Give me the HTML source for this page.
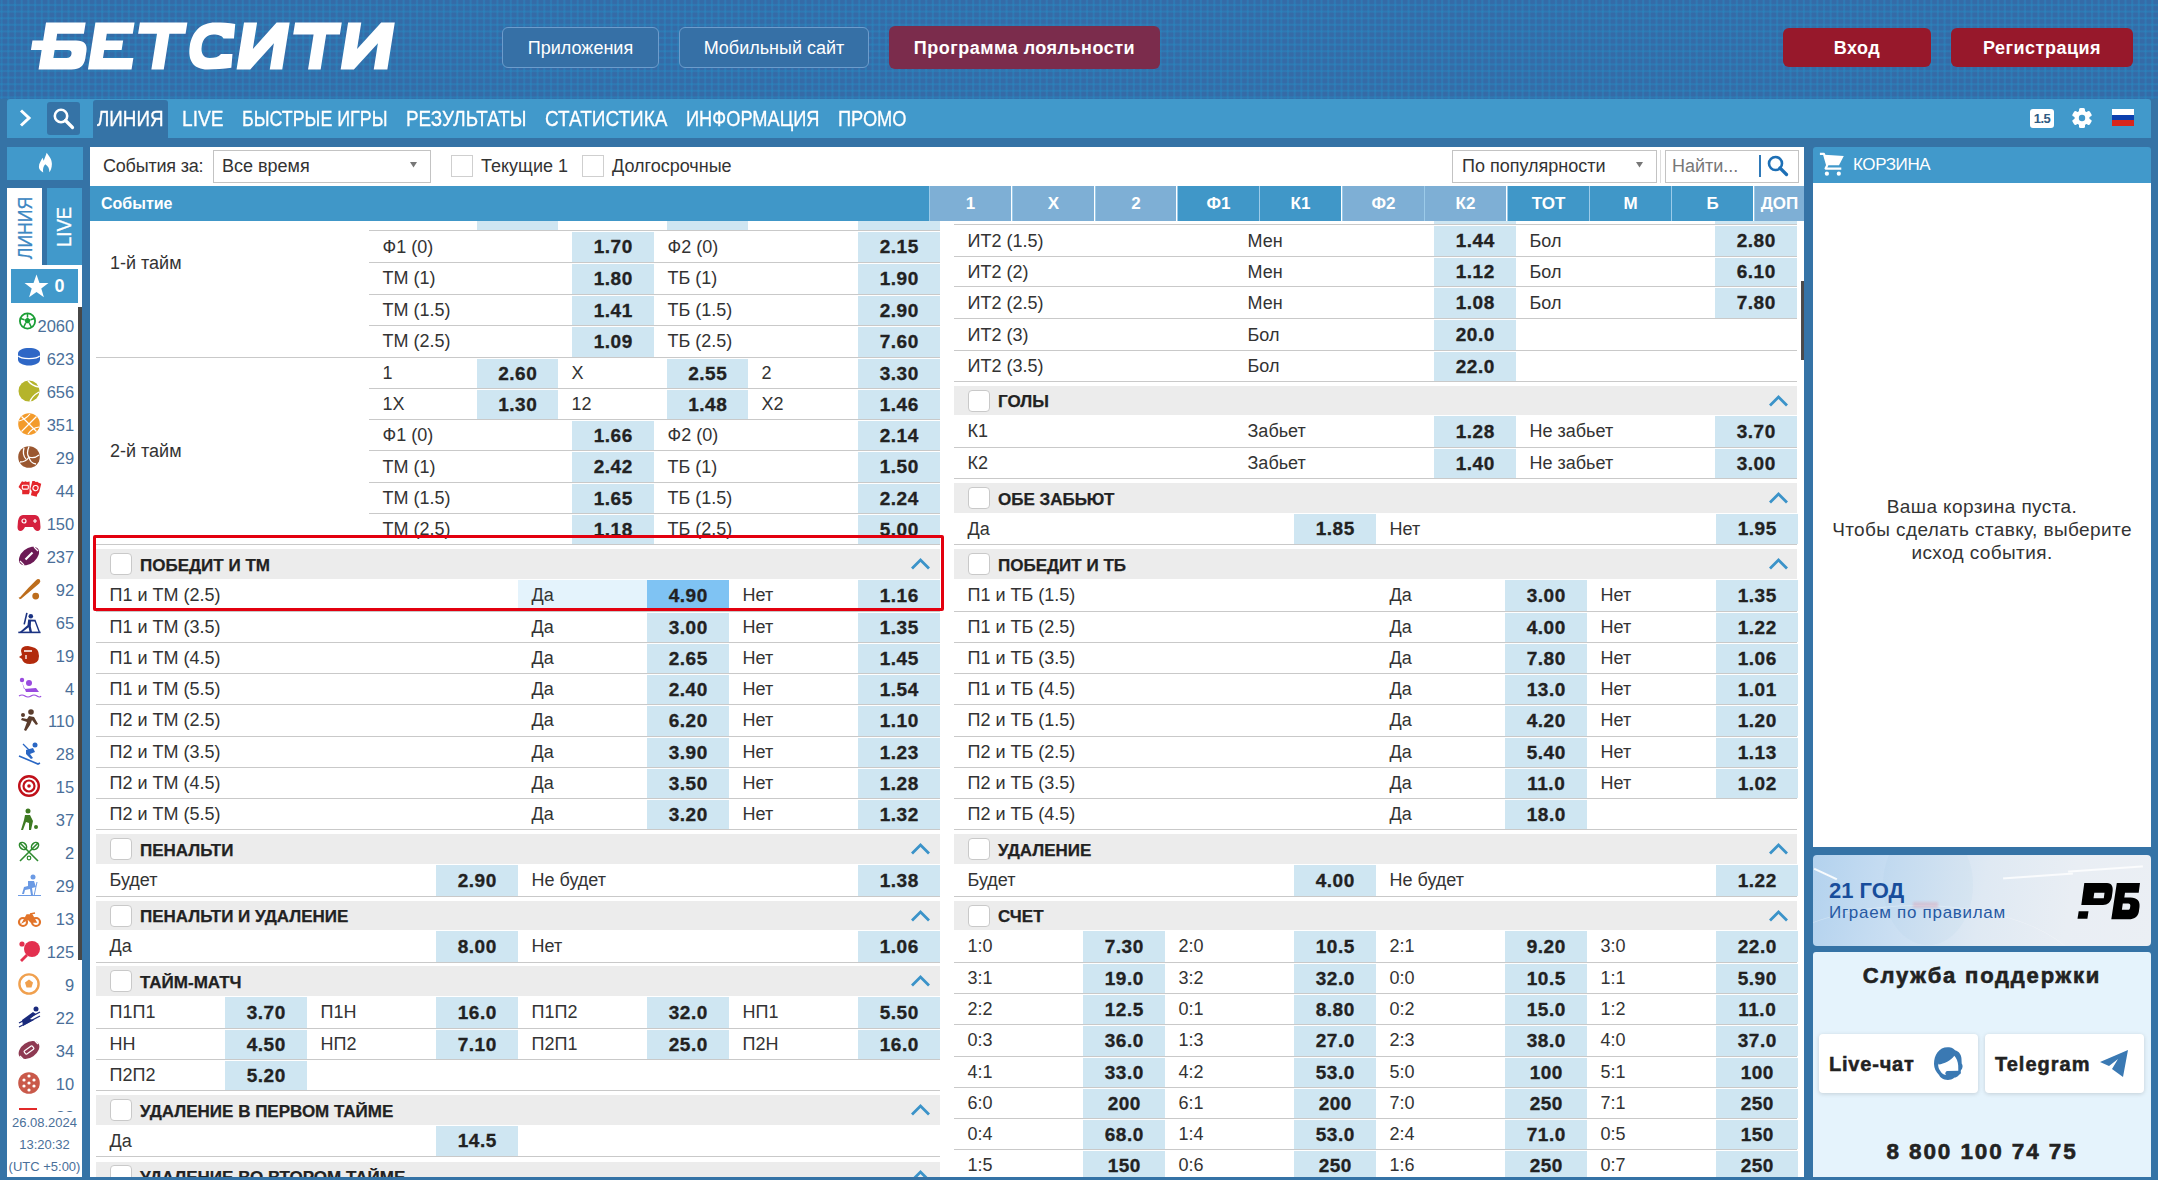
<!DOCTYPE html><html><head><meta charset='utf-8'><style>
*{box-sizing:border-box;margin:0;padding:0}
html,body{width:2158px;height:1180px;overflow:hidden}
body{position:relative;font-family:"Liberation Sans", sans-serif;background:#3573a6;}
.a{position:absolute}
.t{position:absolute;white-space:nowrap}
.hdr{position:absolute;left:0;top:0;width:2158px;height:99px;background-color:#356ba7;
 background-image:repeating-linear-gradient(90deg,transparent 0,rgba(38,142,198,.4) 1.2px,rgba(38,142,198,.4) 2px,transparent 3.2px,transparent 6.7px),repeating-linear-gradient(0deg,transparent 0,rgba(38,142,198,.4) 1.2px,rgba(38,142,198,.4) 2px,transparent 3.2px,transparent 6.6px);}
.btn{position:absolute;border-radius:6px;color:#fff;text-align:center;font-size:18px;}
.nav{position:absolute;left:7px;top:99px;width:2144px;height:39px;background:#4199cb;border-radius:3px 3px 0 0}
.nv{position:absolute;top:99px;height:39px;line-height:40px;color:#fff;font-size:21.5px;white-space:nowrap;-webkit-text-stroke:0.3px #fff}
.lbl{position:absolute;white-space:nowrap;font-size:18px;color:#333;}
.od{position:absolute;background:#cfe6f2;text-align:center;font-weight:bold;font-size:19px;color:#222;letter-spacing:0.5px;text-indent:0.5px;-webkit-text-stroke:0.3px #222}
.ln{position:absolute;height:1px;background:#c9c9c9}
.gh{position:absolute;background:#ececec}
.cb{position:absolute;width:22px;height:22px;background:#fff;border:1px solid #c9c9c9;border-radius:4px}
.st{position:absolute;white-space:nowrap;font-size:17px;font-weight:bold;color:#222;-webkit-text-stroke:0.25px #222}
.ch{position:absolute;width:20px;height:13px}
.sp{position:absolute;left:7px;width:75px;height:33px}
.sn{position:absolute;right:9px;top:0;line-height:33px;font-size:16px;color:#4a6f99}
</style></head><body><div class='hdr'></div><svg class='a' style='left:0;top:0' width='420' height='90'><g transform='translate(0,22.4) skewX(-9)' fill='#fff'><path d='M46,0 H85.7 V11.4 H59 V18 H79 Q91,18 91,29 V36 Q91,47 79,47 H46 V27.5 H35.3 V18 H46 Z M59,27.5 V35.5 H72 Q76.5,35.5 76.5,31.5 Q76.5,27.5 72,27.5 Z'/><path d='M95.4,0 H134.6 V11.4 H108.6 V18 H126 V27.5 H108.6 V35.5 H139 V47 H95.4 Z'/><path d='M139.9,0 H187.4 V11.4 H171.2 V47 H158.8 V11.4 H139.9 Z'/><path d='M236.5,16 L235.5,1.5 C229,0.3 222,0 215,0 C201,0 193.5,9 193.5,23.5 C193.5,38 201,47 215,47 C223,47 231,46.3 238.5,45.3 L237.5,31.5 L226,31.5 C224,34.5 220,35.5 215.5,35.5 C209,35.5 205.5,31 205.5,23.5 C205.5,16 209,12 215.5,12 C220,12 224,13 226,16 Z'/><path d='M244,0 H257.1 L257.1,26.7 L276.6,0 H289.7 V47 H277.2 V20.8 L257.7,47 H244 Z'/><path d='M295.1,0 H341.8 V12.1 H328.1 V47 H315.5 V12.1 H295.1 Z'/><path d='M348.1,0 H361.3 L361.3,26.7 L381.2,0 H394.8 V47 H381.2 V20.8 L361.3,47 H348.1 Z'/></g></svg><div class='btn' style='left:502px;top:27px;width:157px;height:41px;border:1px solid #6d9ccc;background:#3670a6;line-height:41px'>Приложения</div><div class='btn' style='left:679px;top:27px;width:190px;height:41px;border:1px solid #6d9ccc;background:#3670a6;line-height:41px'>Мобильный сайт</div><div class='btn' style='left:889px;top:26px;width:271px;height:43px;background:#7b2c4c;line-height:45px;font-weight:bold;letter-spacing:0.5px'>Программа лояльности</div><div class='btn' style='left:1783px;top:28px;width:148px;height:39px;background:#97182b;line-height:41px;font-weight:bold;letter-spacing:0.5px'>Вход</div><div class='btn' style='left:1951px;top:28px;width:182px;height:39px;background:#97182b;line-height:41px;font-weight:bold;letter-spacing:0.5px'>Регистрация</div><div class='nav'></div><svg class='a' style='left:18px;top:108px' width='16' height='20'><path d='M3,2.5 L11,10 L3,17.5' fill='none' stroke='#fff' stroke-width='3'/></svg><div class='a' style='left:47px;top:102px;width:33px;height:33px;background:#3573a6;border-radius:3px'></div><svg class='a' style='left:52px;top:107px' width='24' height='24'><circle cx='9' cy='9' r='6.2' fill='none' stroke='#fff' stroke-width='2.6'/><path d='M13.5,13.5 L20.5,20.5' stroke='#fff' stroke-width='3.2' stroke-linecap='round'/></svg><div class='a' style='left:93px;top:100px;width:75px;height:38px;background:#3573a6;border-radius:3px 3px 0 0'></div><div class='nv' style='left:97px;transform:scaleX(0.874);transform-origin:0 0'>ЛИНИЯ</div><div class='nv' style='left:182px;transform:scaleX(0.89);transform-origin:0 0'>LIVE</div><div class='nv' style='left:242px;transform:scaleX(0.83);transform-origin:0 0'>БЫСТРЫЕ ИГРЫ</div><div class='nv' style='left:406px;transform:scaleX(0.878);transform-origin:0 0'>РЕЗУЛЬТАТЫ</div><div class='nv' style='left:545px;transform:scaleX(0.882);transform-origin:0 0'>СТАТИСТИКА</div><div class='nv' style='left:686px;transform:scaleX(0.849);transform-origin:0 0'>ИНФОРМАЦИЯ</div><div class='nv' style='left:838px;transform:scaleX(0.849);transform-origin:0 0'>ПРОМО</div><div class='a' style='left:2030px;top:109px;width:24px;height:19px;background:#fff;border-radius:3px;color:#2e5b83;font-weight:bold;font-size:13px;line-height:19px;text-align:center;letter-spacing:-0.5px'>1.5</div><svg class='a' style='left:2072px;top:108px' width='21' height='21'><g fill='#fff'><rect x='7' y='0' width='6' height='20' rx='1.5' transform='rotate(0 10 10)'/><rect x='7' y='0' width='6' height='20' rx='1.5' transform='rotate(60 10 10)'/><rect x='7' y='0' width='6' height='20' rx='1.5' transform='rotate(120 10 10)'/><circle cx='10' cy='10' r='7.5'/></g><circle cx='10' cy='10' r='3.2' fill='#4199cb'/></svg><div class='a' style='left:2112px;top:109px;width:22px;height:17px;background:linear-gradient(#fff 0 33%,#0b3fae 33% 66%,#d9261c 66%)'></div><div class='a' style='left:7px;top:147px;width:76px;height:33px;background:#4199cb'></div><svg class='a' style='left:38px;top:152px' width='16' height='22'><path d='M8.65,0.8 C11,4 13.9,7 13.9,12 C13.9,16 12.5,19 11.3,20.2 C11.5,17 10.5,14.5 7.3,12.3 C5.5,14 4.5,17 5.2,20.4 C2.5,19 0.9,17 0.9,15 C0.9,11 3,9 4.5,5.7 C5,7 5.5,8 5.8,8.7 C6.5,6 8,3.5 8.65,0.8 Z' fill='#fff'/></svg><div class='a' style='left:7px;top:188px;width:35px;height:80px;background:#fff'></div><div class='a' style='left:47px;top:188px;width:35px;height:77px;background:#4199cb'></div><div class='t' style='left:24.5px;top:227.8px;line-height:20px;transform:translate(-50%,-50%) rotate(-90deg) scaleX(0.86);font-size:20.5px;color:#3d88c2;-webkit-text-stroke:0.2px #3d88c2'>ЛИНИЯ</div><div class='t' style='left:64px;top:226.5px;line-height:20px;transform:translate(-50%,-50%) rotate(-90deg) scaleX(0.9);font-size:20.5px;color:#fff;-webkit-text-stroke:0.3px #fff'>LIVE</div><div class='a' style='left:7px;top:265px;width:75px;height:912px;background:#fff'></div><div class='a' style='left:11px;top:269px;width:67px;height:34px;background:#4199cb'></div><svg class='a' style='left:23.6px;top:274px' width='25' height='25'><path d='M12.50,0.40 L15.46,8.92 L24.48,9.11 L17.29,14.56 L19.91,23.19 L12.50,18.04 L5.09,23.19 L7.71,14.56 L0.52,9.11 L9.54,8.92 Z' fill='#fff'/></svg><div class='t' style='left:54.5px;top:269px;line-height:34px;font-size:18px;font-weight:bold;color:#fff'>0</div><div class='a' style='left:78px;top:307px;width:4px;height:653px;background:#474747'></div><div class='a' style='left:7px;top:306px;width:71px;height:806px;overflow:hidden'><svg class='a' style='left:11px;top:6.0px' width='24' height='23' overflow='visible'><circle cx='9.5' cy='9' r='7.6' fill='none' stroke='#1a9e35' stroke-width='1.8'/><path d='M9.5,5.5 L12.5,7.7 L11.4,11.2 L7.6,11.2 L6.5,7.7 Z' fill='#1a9e35'/><path d='M9.5,1.5 V5.5 M12.5,7.7 L16.5,6.5 M11.4,11.2 L13.5,15.5 M7.6,11.2 L5.5,15.5 M6.5,7.7 L2.5,6.5' stroke='#1a9e35' stroke-width='1.5'/></svg><div class='t' style='right:3.8px;top:4.0px;line-height:33px;font-size:16.5px;color:#4a6f99'>2060</div><svg class='a' style='left:11px;top:41.9px' width='24' height='23' overflow='visible'><path d='M0,5.5 C0,2 5,0 11,0 C17,0 22,2 22,5.5 V11.5 C22,15 17,17.5 11,17.5 C5,17.5 0,15 0,11.5 Z' fill='#2e67c6'/><path d='M0.3,7.8 C3,11.5 19,11.5 21.7,7.8' fill='none' stroke='#fff' stroke-width='1.4'/></svg><div class='t' style='right:3.8px;top:36.9px;line-height:33px;font-size:16.5px;color:#4a6f99'>623</div><svg class='a' style='left:11px;top:73.9px' width='24' height='23' overflow='visible'><circle cx='11' cy='11' r='10.5' fill='#b5b42b'/><path d='M10,0.8 Q14,6 21,7 M21,12 Q14,16 12,21.5' fill='none' stroke='#fff' stroke-width='1.4'/></svg><div class='t' style='right:3.8px;top:69.9px;line-height:33px;font-size:16.5px;color:#4a6f99'>656</div><svg class='a' style='left:11px;top:106.9px' width='24' height='23' overflow='visible'><circle cx='11' cy='11' r='10.8' fill='#f39b2b'/><path d='M3.5,3.5 L18.5,18.5 M18.5,3.5 L3.5,18.5 M1,8 Q8,6 12,1 M10,21 Q14,15 21,14' fill='none' stroke='#fff' stroke-width='1.2'/></svg><div class='t' style='right:3.8px;top:102.9px;line-height:33px;font-size:16.5px;color:#4a6f99'>351</div><svg class='a' style='left:11px;top:139.8px' width='24' height='23' overflow='visible'><circle cx='11' cy='11' r='10.8' fill='#9a5730'/><path d='M11,0.5 Q8,8 11,11 Q16,13 21,9 M11,11 Q8,16 2,16 M6,2 Q4,9 8,13 M18,18 Q12,17 11,11' fill='none' stroke='#fff' stroke-width='1.3'/></svg><div class='t' style='right:3.8px;top:135.8px;line-height:33px;font-size:16.5px;color:#4a6f99'>29</div><svg class='a' style='left:11px;top:172.8px' width='24' height='23' overflow='visible'><path d='M0.5,8 L2.5,4.5 L4,2.3 L6,3 L7.5,2.3 L9,3 L11.6,2.5 L11.6,13.5 L10.8,15.3 H4.2 V11.5 Z' fill='#e4262c'/><rect x='4.3' y='6.3' width='6' height='3.8' rx='0.8' fill='none' stroke='#fff' stroke-width='1.1'/><g transform='rotate(14 17 10)'><path d='M12.5,3 L14.5,2.3 L16,3 L17.5,2.3 L19,3 L21.8,3.5 L21.8,12 L20.5,14.5 V17 H14.5 V13 L12.5,11 Z' fill='#e4262c'/><circle cx='17.3' cy='9' r='2.6' fill='none' stroke='#fff' stroke-width='1.1'/></g></svg><div class='t' style='right:3.8px;top:168.8px;line-height:33px;font-size:16.5px;color:#4a6f99'>44</div><svg class='a' style='left:11px;top:205.7px' width='24' height='23' overflow='visible'><path d='M5,3 H17 Q21,3 22,9 L22.5,15 Q22.5,19 19.5,19 Q17,19 15,15 H7 Q5,19 2.5,19 Q-0.5,19 -0.5,15 L0,9 Q1,3 5,3 Z' fill='#d5203e'/><circle cx='6' cy='9' r='2' fill='none' stroke='#fff' stroke-width='1.2'/><path d='M15,9 H19 M17,7 V11' stroke='#fff' stroke-width='1.2'/></svg><div class='t' style='right:3.8px;top:201.7px;line-height:33px;font-size:16.5px;color:#4a6f99'>150</div><svg class='a' style='left:11px;top:238.7px' width='24' height='23' overflow='visible'><ellipse cx='11' cy='11' rx='11.5' ry='7.5' transform='rotate(-40 11 11)' fill='#6c1a55'/><path d='M7.5,14.5 L14.5,7.5' stroke='#fff' stroke-width='2.2'/><path d='M2,16 L6,20 M16,2 L20,6' stroke='#fff' stroke-width='1.2'/></svg><div class='t' style='right:3.8px;top:234.7px;line-height:33px;font-size:16.5px;color:#4a6f99'>237</div><svg class='a' style='left:11px;top:271.6px' width='24' height='23' overflow='visible'><path d='M0.6,19.6 L1.8,21.3 L3.2,20.8 L13,12.5 L21.2,5.6 Q23.2,3.4 21.8,1.6 Q20,0.2 18,2.2 L10.5,9.8 L2,19.2 Z' fill='#bd6d1c'/><circle cx='17.7' cy='18.1' r='3.4' fill='#bd6d1c'/></svg><div class='t' style='right:3.8px;top:267.6px;line-height:33px;font-size:16.5px;color:#4a6f99'>92</div><svg class='a' style='left:11px;top:304.5px' width='24' height='23' overflow='visible'><path d='M8.9,1.9 L6.2,13.4' stroke='#1a3282' stroke-width='1.6'/><circle cx='12.8' cy='5.2' r='2.3' fill='#1a3282'/><path d='M10.2,8.6 L17.6,8.8 L17.4,10.6 L13,10.6 L12.8,15.5 L14,21 H11.5 L10.6,16.2 L4.5,21 H1.8 L9.5,14.2 Z' fill='#1a3282'/><path d='M17,9.6 L21.3,21' stroke='#1a3282' stroke-width='1.4'/><path d='M0.3,21.4 H22.6' stroke='#1a3282' stroke-width='1.6'/></svg><div class='t' style='right:3.8px;top:300.5px;line-height:33px;font-size:16.5px;color:#4a6f99'>65</div><svg class='a' style='left:11px;top:337.5px' width='24' height='23' overflow='visible'><path d='M3,7 Q3,2 10,2 L14,3 Q21,4 21,12 Q21,20 12,20 Q5,20 4,15 L1,13 L4,11 Z' fill='#b22a0c'/><path d='M6,7 H14 M8,11 V15' stroke='#fff' stroke-width='1.3'/></svg><div class='t' style='right:3.8px;top:333.5px;line-height:33px;font-size:16.5px;color:#4a6f99'>19</div><svg class='a' style='left:11px;top:370.5px' width='24' height='23' overflow='visible'><circle cx='4' cy='3' r='2.2' fill='#9a4bdf'/><circle cx='11' cy='6' r='3' fill='#9a4bdf'/><path d='M4,5 L6,12 L18,11 L21,15 L8,15 Z' fill='#9a4bdf'/><path d='M1,19 Q4,17 7,19 T13,19 T19,19 T23,19' fill='none' stroke='#9a4bdf' stroke-width='1.2'/></svg><div class='t' style='right:3.8px;top:366.5px;line-height:33px;font-size:16.5px;color:#4a6f99'>4</div><svg class='a' style='left:11px;top:403.4px' width='24' height='23' overflow='visible'><circle cx='13' cy='3' r='2.8' fill='#5a3c2c'/><path d='M11,7 L16,8 L20,15 L18,16 L14,11 L12,16 L8,22 L6,21 L9,13 L3,11 L4,9 L9,10 Z' fill='#5a3c2c'/><circle cx='5' cy='6' r='2' fill='#5a3c2c'/></svg><div class='t' style='right:3.8px;top:399.4px;line-height:33px;font-size:16.5px;color:#4a6f99'>110</div><svg class='a' style='left:11px;top:436.4px' width='24' height='23' overflow='visible'><circle cx='17' cy='3' r='2.5' fill='#2a67c4'/><path d='M8,8 L15,6 L17,10 L12,12 L15,16 L13,17 L8,12 Z' fill='#2a67c4'/><path d='M1,14 L20,22 L22,21' fill='none' stroke='#2a67c4' stroke-width='1.6'/><path d='M5,2 L11,8' stroke='#2a67c4' stroke-width='1.2'/></svg><div class='t' style='right:3.8px;top:432.4px;line-height:33px;font-size:16.5px;color:#4a6f99'>28</div><svg class='a' style='left:11px;top:469.3px' width='24' height='23' overflow='visible'><circle cx='11' cy='11' r='9.8' fill='none' stroke='#c0101a' stroke-width='2.4'/><circle cx='11' cy='11' r='5.5' fill='none' stroke='#c0101a' stroke-width='2.2'/><circle cx='11' cy='11' r='1.8' fill='#c0101a'/></svg><div class='t' style='right:3.8px;top:465.3px;line-height:33px;font-size:16.5px;color:#4a6f99'>15</div><svg class='a' style='left:11px;top:502.2px' width='24' height='23' overflow='visible'><circle cx='10' cy='3' r='2.5' fill='#3e7a22'/><path d='M7,7 L12,7 L15,13 L13,22 H11 L11,15 L8,14 L5,22 H3 L6,12 Z' fill='#3e7a22'/><circle cx='18' cy='19' r='2' fill='#3e7a22'/></svg><div class='t' style='right:3.8px;top:498.2px;line-height:33px;font-size:16.5px;color:#4a6f99'>37</div><svg class='a' style='left:11px;top:535.2px' width='24' height='23' overflow='visible'><path d='M2,2 L20,20 M20,2 L2,20' stroke='#2d8a2e' stroke-width='1.6'/><ellipse cx='5' cy='5' rx='4' ry='3' transform='rotate(45 5 5)' fill='none' stroke='#2d8a2e' stroke-width='1.6'/><ellipse cx='17' cy='5' rx='4' ry='3' transform='rotate(-45 17 5)' fill='none' stroke='#2d8a2e' stroke-width='1.6'/><circle cx='11' cy='17' r='1.8' fill='none' stroke='#2d8a2e' stroke-width='1.2'/></svg><div class='t' style='right:3.8px;top:531.2px;line-height:33px;font-size:16.5px;color:#4a6f99'>2</div><svg class='a' style='left:11px;top:568.2px' width='24' height='23' overflow='visible'><circle cx='15' cy='3' r='2.5' fill='#6b9ae4'/><path d='M10,7 L16,7 L18,13 L14,14 L15,21 L13,21 L12,15 L7,16 L6,20 H4 L6,13 L10,12 Z' fill='#6b9ae4'/><path d='M0,21.5 H23 M19,8 L16,22' stroke='#6b9ae4' stroke-width='1'/></svg><div class='t' style='right:3.8px;top:564.2px;line-height:33px;font-size:16.5px;color:#4a6f99'>29</div><svg class='a' style='left:11px;top:601.1px' width='24' height='23' overflow='visible'><circle cx='5' cy='15' r='4' fill='none' stroke='#e2742a' stroke-width='2.2'/><circle cx='18' cy='15' r='4' fill='none' stroke='#e2742a' stroke-width='2.2'/><path d='M5,15 L9,8 L14,8 L18,15 L13,15 L10,12 Z M12,7 L17,6' fill='#e2742a' stroke='#e2742a' stroke-width='1.5'/></svg><div class='t' style='right:3.8px;top:597.1px;line-height:33px;font-size:16.5px;color:#4a6f99'>13</div><svg class='a' style='left:11px;top:634.1px' width='24' height='23' overflow='visible'><circle cx='14' cy='9' r='8' fill='#e3304f'/><path d='M8,14 L2,20 L4,22 L10,16 Z' fill='#e3304f'/><circle cx='4' cy='4' r='2.6' fill='#e3304f'/></svg><div class='t' style='right:3.8px;top:630.1px;line-height:33px;font-size:16.5px;color:#4a6f99'>125</div><svg class='a' style='left:11px;top:667.0px' width='24' height='23' overflow='visible'><circle cx='11' cy='11' r='9.6' fill='none' stroke='#f0a04e' stroke-width='2.4'/><path d='M11,6.5 L15,9.5 L13.5,14.5 H8.5 L7,9.5 Z' fill='#f0a04e'/></svg><div class='t' style='right:3.8px;top:663.0px;line-height:33px;font-size:16.5px;color:#4a6f99'>9</div><svg class='a' style='left:11px;top:700.0px' width='24' height='23' overflow='visible'><circle cx='18' cy='3' r='2.5' fill='#1a2a7c'/><path d='M4,14 L15,6 L18,8 L12,13 L16,14 L5,20 Z' fill='#1a2a7c'/><path d='M1,17 L22,6 M1,21 L22,10' stroke='#1a2a7c' stroke-width='1.3'/></svg><div class='t' style='right:3.8px;top:696.0px;line-height:33px;font-size:16.5px;color:#4a6f99'>22</div><svg class='a' style='left:11px;top:732.9px' width='24' height='23' overflow='visible'><ellipse cx='11' cy='11' rx='11.5' ry='7.5' transform='rotate(-35 11 11)' fill='#8e3a52'/><rect x='6' y='9' width='10' height='4' rx='1' transform='rotate(-35 11 11)' fill='none' stroke='#fff' stroke-width='1.2'/><path d='M2,17 L5,20 M17,2 L20,5' stroke='#fff' stroke-width='1.2'/></svg><div class='t' style='right:3.8px;top:728.9px;line-height:33px;font-size:16.5px;color:#4a6f99'>34</div><svg class='a' style='left:11px;top:765.8px' width='24' height='23' overflow='visible'><circle cx='11' cy='11' r='10.8' fill='#c9594a'/><g fill='#fff'><circle cx='11' cy='4' r='1.6'/><circle cx='6' cy='8' r='1.6'/><circle cx='16' cy='8' r='1.6'/><circle cx='11' cy='11' r='1.6'/><circle cx='6' cy='14' r='1.6'/><circle cx='16' cy='14' r='1.6'/><circle cx='11' cy='18' r='1.6'/></g></svg><div class='t' style='right:3.8px;top:761.8px;line-height:33px;font-size:16.5px;color:#4a6f99'>10</div><svg class='a' style='left:11px;top:798.8px' width='24' height='23' overflow='visible'><path d='M1,4 H19' stroke='#e22a2a' stroke-width='2'/></svg><div class='t' style='right:3.8px;top:794.8px;line-height:33px;font-size:16.5px;color:#4a6f99'>28</div></div><div class='t' style='left:7px;width:75px;top:1113px;line-height:20px;font-size:13px;color:#4a6f99;text-align:center'>26.08.2024</div><div class='t' style='left:7px;width:75px;top:1135px;line-height:20px;font-size:13px;color:#4a6f99;text-align:center'>13:20:32</div><div class='t' style='left:7px;width:75px;top:1157px;line-height:20px;font-size:13px;color:#4a6f99;text-align:center'>(UTC +5:00)</div><div class='a' style='left:90px;top:147px;width:1714px;height:1030px;background:#fff'></div><div class='t' style='left:103px;top:150px;line-height:32px;font-size:18px;color:#333;letter-spacing:-0.2px'>События за:</div><div class='a' style='left:213px;top:150px;width:218px;height:33px;border:1px solid #c3c3c3;background:#fff'></div><div class='t' style='left:222px;top:150px;line-height:32px;font-size:18px;color:#333'>Все время</div><svg class='a' style='left:410px;top:162px' width='8' height='6'><path d='M0,0 H7 L3.5,5.5 Z' fill='#777'/></svg><div class='cb' style='left:451px;top:155px;border-radius:0;border-color:#cfcfcf'></div><div class='t' style='left:481px;top:150px;line-height:32px;font-size:18px;color:#333'>Текущие 1</div><div class='cb' style='left:582px;top:155px;border-radius:0;border-color:#cfcfcf'></div><div class='t' style='left:612px;top:150px;line-height:32px;font-size:18px;color:#333'>Долгосрочные</div><div class='a' style='left:1452px;top:150px;width:205px;height:33px;border:1px solid #c3c3c3;background:#fff'></div><div class='t' style='left:1462px;top:150px;line-height:32px;font-size:18px;color:#333'>По популярности</div><svg class='a' style='left:1636px;top:162px' width='8' height='6'><path d='M0,0 H7 L3.5,5.5 Z' fill='#777'/></svg><div class='a' style='left:1660px;top:150px;width:1px;height:33px;background:#ddd'></div><div class='a' style='left:1665px;top:150px;width:134px;height:33px;border:1px solid #c3c3c3;background:#fff'></div><div class='t' style='left:1672px;top:150px;line-height:32px;font-size:18px;color:#777'>Найти...</div><div class='a' style='left:1759px;top:155px;width:1.5px;height:22px;background:#2f79b8'></div><svg class='a' style='left:1766px;top:154px' width='24' height='24'><circle cx='9.5' cy='9.5' r='6.5' fill='none' stroke='#1d6fb5' stroke-width='2.6'/><path d='M14,14 L20.5,20.5' stroke='#1d6fb5' stroke-width='3.2' stroke-linecap='round'/></svg><div class='a' style='left:90px;top:186px;width:839px;height:35px;background:#4097c8'></div><div class='t' style='left:101px;top:186px;line-height:35px;font-size:16px;font-weight:bold;color:#fff'>Событие</div><div class='a' style='left:929px;top:186px;width:82px;height:35px;background:#7eafd5;border-left:1px solid #9ccbe9;color:#fff;font-weight:bold;font-size:17px;line-height:35px;text-align:center'>1</div><div class='a' style='left:1012px;top:186px;width:82px;height:35px;background:#7eafd5;border-left:1px solid #9ccbe9;color:#fff;font-weight:bold;font-size:17px;line-height:35px;text-align:center'>X</div><div class='a' style='left:1095px;top:186px;width:81px;height:35px;background:#7eafd5;border-left:1px solid #9ccbe9;color:#fff;font-weight:bold;font-size:17px;line-height:35px;text-align:center'>2</div><div class='a' style='left:1177px;top:186px;width:82px;height:35px;background:#4097c8;border-left:1px solid #9ccbe9;color:#fff;font-weight:bold;font-size:17px;line-height:35px;text-align:center'>Ф1</div><div class='a' style='left:1259px;top:186px;width:82px;height:35px;background:#4097c8;border-left:1px solid #9ccbe9;color:#fff;font-weight:bold;font-size:17px;line-height:35px;text-align:center'>К1</div><div class='a' style='left:1342px;top:186px;width:82px;height:35px;background:#7eafd5;border-left:1px solid #9ccbe9;color:#fff;font-weight:bold;font-size:17px;line-height:35px;text-align:center'>Ф2</div><div class='a' style='left:1424px;top:186px;width:82px;height:35px;background:#7eafd5;border-left:1px solid #9ccbe9;color:#fff;font-weight:bold;font-size:17px;line-height:35px;text-align:center'>К2</div><div class='a' style='left:1507px;top:186px;width:82px;height:35px;background:#4097c8;border-left:1px solid #9ccbe9;color:#fff;font-weight:bold;font-size:17px;line-height:35px;text-align:center'>ТОТ</div><div class='a' style='left:1589px;top:186px;width:82px;height:35px;background:#4097c8;border-left:1px solid #9ccbe9;color:#fff;font-weight:bold;font-size:17px;line-height:35px;text-align:center'>М</div><div class='a' style='left:1671px;top:186px;width:82px;height:35px;background:#4097c8;border-left:1px solid #9ccbe9;color:#fff;font-weight:bold;font-size:17px;line-height:35px;text-align:center'>Б</div><div class='a' style='left:1754px;top:186px;width:50px;height:35px;background:#7eafd5;border-left:1px solid #9ccbe9;color:#fff;font-weight:bold;font-size:17px;line-height:35px;text-align:center'>ДОП</div><div class='a' style='left:90px;top:221px;width:1714px;height:956px;overflow:hidden'><div class='a' style='left:387px;top:0px;width:81px;height:9px;background:#cfe6f2'></div><div class='a' style='left:577px;top:0px;width:81px;height:9px;background:#cfe6f2'></div><div class='a' style='left:768px;top:0px;width:82px;height:9px;background:#cfe6f2'></div><div class='ln' style='left:279px;top:9px;width:571px'></div><div class='lbl' style='left:292.5px;top:9.80px;line-height:32px;'>Ф1 (0)</div><div class='od' style='left:482px;top:11px;width:82px;height:30px;line-height:30px;'>1.70</div><div class='lbl' style='left:577.5px;top:9.80px;line-height:32px;'>Ф2 (0)</div><div class='od' style='left:768px;top:11px;width:82px;height:30px;line-height:30px;'>2.15</div><div class='ln' style='left:279px;top:41px;width:571px'></div><div class='lbl' style='left:292.5px;top:41.45px;line-height:32px;'>ТМ (1)</div><div class='od' style='left:482px;top:43px;width:82px;height:30px;line-height:30px;'>1.80</div><div class='lbl' style='left:577.5px;top:41.45px;line-height:32px;'>ТБ (1)</div><div class='od' style='left:768px;top:43px;width:82px;height:30px;line-height:30px;'>1.90</div><div class='ln' style='left:279px;top:73px;width:571px'></div><div class='lbl' style='left:292.5px;top:72.60px;line-height:32px;'>ТМ (1.5)</div><div class='od' style='left:482px;top:75px;width:82px;height:29px;line-height:29px;'>1.41</div><div class='lbl' style='left:577.5px;top:72.60px;line-height:32px;'>ТБ (1.5)</div><div class='od' style='left:768px;top:75px;width:82px;height:29px;line-height:29px;'>2.90</div><div class='ln' style='left:279px;top:104px;width:571px'></div><div class='lbl' style='left:292.5px;top:104.15px;line-height:32px;'>ТМ (2.5)</div><div class='od' style='left:482px;top:106px;width:82px;height:30px;line-height:30px;'>1.09</div><div class='lbl' style='left:577.5px;top:104.15px;line-height:32px;'>ТБ (2.5)</div><div class='od' style='left:768px;top:106px;width:82px;height:30px;line-height:30px;'>7.60</div><div class='ln' style='left:6px;top:136px;width:844px'></div><div class='lbl' style='left:20.0px;top:25.50px;line-height:32px;'>1-й тайм</div><div class='lbl' style='left:292.5px;top:135.85px;line-height:32px;'>1</div><div class='od' style='left:387px;top:138px;width:81px;height:29px;line-height:29px;'>2.60</div><div class='lbl' style='left:481.5px;top:135.85px;line-height:32px;'>X</div><div class='od' style='left:577px;top:138px;width:81px;height:29px;line-height:29px;'>2.55</div><div class='lbl' style='left:671.5px;top:135.85px;line-height:32px;'>2</div><div class='od' style='left:768px;top:138px;width:82px;height:29px;line-height:29px;'>3.30</div><div class='ln' style='left:279px;top:167px;width:571px'></div><div class='lbl' style='left:292.5px;top:167.10px;line-height:32px;'>1X</div><div class='od' style='left:387px;top:169px;width:81px;height:29px;line-height:29px;'>1.30</div><div class='lbl' style='left:481.5px;top:167.10px;line-height:32px;'>12</div><div class='od' style='left:577px;top:169px;width:81px;height:29px;line-height:29px;'>1.48</div><div class='lbl' style='left:671.5px;top:167.10px;line-height:32px;'>X2</div><div class='od' style='left:768px;top:169px;width:82px;height:29px;line-height:29px;'>1.46</div><div class='ln' style='left:279px;top:198px;width:571px'></div><div class='lbl' style='left:292.5px;top:198.35px;line-height:32px;'>Ф1 (0)</div><div class='od' style='left:482px;top:200px;width:82px;height:29px;line-height:29px;'>1.66</div><div class='lbl' style='left:577.5px;top:198.35px;line-height:32px;'>Ф2 (0)</div><div class='od' style='left:768px;top:200px;width:82px;height:29px;line-height:29px;'>2.14</div><div class='ln' style='left:279px;top:229px;width:571px'></div><div class='lbl' style='left:292.5px;top:229.60px;line-height:32px;'>ТМ (1)</div><div class='od' style='left:482px;top:231px;width:82px;height:30px;line-height:30px;'>2.42</div><div class='lbl' style='left:577.5px;top:229.60px;line-height:32px;'>ТБ (1)</div><div class='od' style='left:768px;top:231px;width:82px;height:30px;line-height:30px;'>1.50</div><div class='ln' style='left:279px;top:261px;width:571px'></div><div class='lbl' style='left:292.5px;top:260.85px;line-height:32px;'>ТМ (1.5)</div><div class='od' style='left:482px;top:263px;width:82px;height:29px;line-height:29px;'>1.65</div><div class='lbl' style='left:577.5px;top:260.85px;line-height:32px;'>ТБ (1.5)</div><div class='od' style='left:768px;top:263px;width:82px;height:29px;line-height:29px;'>2.24</div><div class='ln' style='left:279px;top:292px;width:571px'></div><div class='lbl' style='left:292.5px;top:292.20px;line-height:32px;'>ТМ (2.5)</div><div class='od' style='left:482px;top:294px;width:82px;height:29px;line-height:29px;'>1.18</div><div class='lbl' style='left:577.5px;top:292.20px;line-height:32px;'>ТБ (2.5)</div><div class='od' style='left:768px;top:294px;width:82px;height:29px;line-height:29px;'>5.00</div><div class='ln' style='left:6px;top:323px;width:844px'></div><div class='lbl' style='left:20.0px;top:213.50px;line-height:32px;'>2-й тайм</div><div class='gh' style='left:6px;top:328px;width:844px;height:30px'></div><div class='cb' style='left:20px;top:332.3px'></div><div class='st' style='left:50px;top:329.8px;line-height:30px'>ПОБЕДИТ И ТМ</div><svg class='a' style='left:820px;top:336.3px' width='21' height='14'><path d='M2,11.5 L10.5,3 L19,11.5' fill='none' stroke='#3b93c9' stroke-width='2.8'/></svg><div class='lbl' style='left:19.5px;top:357.88px;line-height:32px;'>П1 и ТМ (2.5)</div><div class='a' style='left:428px;top:359px;width:129px;height:31px;background:#e4f3fc'></div><div class='lbl' style='left:441.5px;top:357.88px;line-height:32px;'>Да</div><div class='od' style='left:557px;top:359px;width:82px;height:31px;line-height:31px;background:#7fc3f3;'>4.90</div><div class='lbl' style='left:652.5px;top:357.88px;line-height:32px;'>Нет</div><div class='od' style='left:768px;top:359px;width:82px;height:31px;line-height:31px;'>1.16</div><div class='ln' style='left:6px;top:390px;width:844px'></div><div class='lbl' style='left:19.5px;top:389.65px;line-height:32px;'>П1 и ТМ (3.5)</div><div class='lbl' style='left:441.5px;top:389.65px;line-height:32px;'>Да</div><div class='od' style='left:557px;top:392px;width:82px;height:29px;line-height:29px;'>3.00</div><div class='lbl' style='left:652.5px;top:389.65px;line-height:32px;'>Нет</div><div class='od' style='left:768px;top:392px;width:82px;height:29px;line-height:29px;'>1.35</div><div class='ln' style='left:6px;top:421px;width:844px'></div><div class='lbl' style='left:19.5px;top:420.92px;line-height:32px;'>П1 и ТМ (4.5)</div><div class='lbl' style='left:441.5px;top:420.92px;line-height:32px;'>Да</div><div class='od' style='left:557px;top:423px;width:82px;height:29px;line-height:29px;'>2.65</div><div class='lbl' style='left:652.5px;top:420.92px;line-height:32px;'>Нет</div><div class='od' style='left:768px;top:423px;width:82px;height:29px;line-height:29px;'>1.45</div><div class='ln' style='left:6px;top:452px;width:844px'></div><div class='lbl' style='left:19.5px;top:452.19px;line-height:32px;'>П1 и ТМ (5.5)</div><div class='lbl' style='left:441.5px;top:452.19px;line-height:32px;'>Да</div><div class='od' style='left:557px;top:454px;width:82px;height:29px;line-height:29px;'>2.40</div><div class='lbl' style='left:652.5px;top:452.19px;line-height:32px;'>Нет</div><div class='od' style='left:768px;top:454px;width:82px;height:29px;line-height:29px;'>1.54</div><div class='ln' style='left:6px;top:483px;width:844px'></div><div class='lbl' style='left:19.5px;top:483.47px;line-height:32px;'>П2 и ТМ (2.5)</div><div class='lbl' style='left:441.5px;top:483.47px;line-height:32px;'>Да</div><div class='od' style='left:557px;top:485px;width:82px;height:30px;line-height:30px;'>6.20</div><div class='lbl' style='left:652.5px;top:483.47px;line-height:32px;'>Нет</div><div class='od' style='left:768px;top:485px;width:82px;height:30px;line-height:30px;'>1.10</div><div class='ln' style='left:6px;top:515px;width:844px'></div><div class='lbl' style='left:19.5px;top:514.74px;line-height:32px;'>П2 и ТМ (3.5)</div><div class='lbl' style='left:441.5px;top:514.74px;line-height:32px;'>Да</div><div class='od' style='left:557px;top:517px;width:82px;height:29px;line-height:29px;'>3.90</div><div class='lbl' style='left:652.5px;top:514.74px;line-height:32px;'>Нет</div><div class='od' style='left:768px;top:517px;width:82px;height:29px;line-height:29px;'>1.23</div><div class='ln' style='left:6px;top:546px;width:844px'></div><div class='lbl' style='left:19.5px;top:546.00px;line-height:32px;'>П2 и ТМ (4.5)</div><div class='lbl' style='left:441.5px;top:546.00px;line-height:32px;'>Да</div><div class='od' style='left:557px;top:548px;width:82px;height:29px;line-height:29px;'>3.50</div><div class='lbl' style='left:652.5px;top:546.00px;line-height:32px;'>Нет</div><div class='od' style='left:768px;top:548px;width:82px;height:29px;line-height:29px;'>1.28</div><div class='ln' style='left:6px;top:577px;width:844px'></div><div class='lbl' style='left:19.5px;top:577.27px;line-height:32px;'>П2 и ТМ (5.5)</div><div class='lbl' style='left:441.5px;top:577.27px;line-height:32px;'>Да</div><div class='od' style='left:557px;top:579px;width:82px;height:29px;line-height:29px;'>3.20</div><div class='lbl' style='left:652.5px;top:577.27px;line-height:32px;'>Нет</div><div class='od' style='left:768px;top:579px;width:82px;height:29px;line-height:29px;'>1.32</div><div class='ln' style='left:6px;top:608px;width:844px'></div><div class='gh' style='left:6px;top:613px;width:844px;height:30px'></div><div class='cb' style='left:20px;top:617.4px'></div><div class='st' style='left:50px;top:614.9px;line-height:30px'>ПЕНАЛЬТИ</div><svg class='a' style='left:820px;top:621.4px' width='21' height='14'><path d='M2,11.5 L10.5,3 L19,11.5' fill='none' stroke='#3b93c9' stroke-width='2.8'/></svg><div class='lbl' style='left:19.5px;top:642.99px;line-height:32px;'>Будет</div><div class='od' style='left:346px;top:644px;width:82px;height:31px;line-height:31px;'>2.90</div><div class='lbl' style='left:441.5px;top:642.99px;line-height:32px;'>Не будет</div><div class='od' style='left:768px;top:644px;width:82px;height:31px;line-height:31px;'>1.38</div><div class='ln' style='left:6px;top:675px;width:844px'></div><div class='gh' style='left:6px;top:680px;width:844px;height:29px'></div><div class='cb' style='left:20px;top:683.5px'></div><div class='st' style='left:50px;top:681.0px;line-height:30px'>ПЕНАЛЬТИ И УДАЛЕНИЕ</div><svg class='a' style='left:820px;top:687.5px' width='21' height='14'><path d='M2,11.5 L10.5,3 L19,11.5' fill='none' stroke='#3b93c9' stroke-width='2.8'/></svg><div class='lbl' style='left:19.5px;top:709.09px;line-height:32px;'>Да</div><div class='od' style='left:346px;top:710px;width:82px;height:31px;line-height:31px;'>8.00</div><div class='lbl' style='left:441.5px;top:709.09px;line-height:32px;'>Нет</div><div class='od' style='left:768px;top:710px;width:82px;height:31px;line-height:31px;'>1.06</div><div class='ln' style='left:6px;top:741px;width:844px'></div><div class='gh' style='left:6px;top:745px;width:844px;height:30px'></div><div class='cb' style='left:20px;top:749.4px'></div><div class='st' style='left:50px;top:746.9px;line-height:30px'>ТАЙМ-МАТЧ</div><svg class='a' style='left:820px;top:753.4px' width='21' height='14'><path d='M2,11.5 L10.5,3 L19,11.5' fill='none' stroke='#3b93c9' stroke-width='2.8'/></svg><div class='lbl' style='left:19.5px;top:774.99px;line-height:32px;'>П1П1</div><div class='od' style='left:135px;top:776px;width:82px;height:31px;line-height:31px;'>3.70</div><div class='lbl' style='left:230.5px;top:774.99px;line-height:32px;'>П1Н</div><div class='od' style='left:346px;top:776px;width:82px;height:31px;line-height:31px;'>16.0</div><div class='lbl' style='left:441.5px;top:774.99px;line-height:32px;'>П1П2</div><div class='od' style='left:557px;top:776px;width:82px;height:31px;line-height:31px;'>32.0</div><div class='lbl' style='left:652.5px;top:774.99px;line-height:32px;'>НП1</div><div class='od' style='left:768px;top:776px;width:82px;height:31px;line-height:31px;'>5.50</div><div class='ln' style='left:6px;top:807px;width:844px'></div><div class='lbl' style='left:19.5px;top:806.76px;line-height:32px;'>НН</div><div class='od' style='left:135px;top:809px;width:82px;height:29px;line-height:29px;'>4.50</div><div class='lbl' style='left:230.5px;top:806.76px;line-height:32px;'>НП2</div><div class='od' style='left:346px;top:809px;width:82px;height:29px;line-height:29px;'>7.10</div><div class='lbl' style='left:441.5px;top:806.76px;line-height:32px;'>П2П1</div><div class='od' style='left:557px;top:809px;width:82px;height:29px;line-height:29px;'>25.0</div><div class='lbl' style='left:652.5px;top:806.76px;line-height:32px;'>П2Н</div><div class='od' style='left:768px;top:809px;width:82px;height:29px;line-height:29px;'>16.0</div><div class='ln' style='left:6px;top:838px;width:844px'></div><div class='lbl' style='left:19.5px;top:838.03px;line-height:32px;'>П2П2</div><div class='od' style='left:135px;top:840px;width:82px;height:29px;line-height:29px;'>5.20</div><div class='ln' style='left:6px;top:869px;width:844px'></div><div class='gh' style='left:6px;top:874px;width:844px;height:30px'></div><div class='cb' style='left:20px;top:878.2px'></div><div class='st' style='left:50px;top:875.7px;line-height:30px'>УДАЛЕНИЕ В ПЕРВОМ ТАЙМЕ</div><svg class='a' style='left:820px;top:882.2px' width='21' height='14'><path d='M2,11.5 L10.5,3 L19,11.5' fill='none' stroke='#3b93c9' stroke-width='2.8'/></svg><div class='lbl' style='left:19.5px;top:903.78px;line-height:32px;'>Да</div><div class='od' style='left:346px;top:905px;width:82px;height:30px;line-height:30px;'>14.5</div><div class='ln' style='left:6px;top:935px;width:844px'></div><div class='gh' style='left:6px;top:941px;width:844px;height:29px'></div><div class='cb' style='left:20px;top:944.4px'></div><div class='st' style='left:50px;top:941.9px;line-height:30px'>УДАЛЕНИЕ ВО ВТОРОМ ТАЙМЕ</div><svg class='a' style='left:820px;top:948.4px' width='21' height='14'><path d='M2,11.5 L10.5,3 L19,11.5' fill='none' stroke='#3b93c9' stroke-width='2.8'/></svg><div class='lbl' style='left:19.5px;top:969.98px;line-height:32px;'>Да</div><div class='od' style='left:346px;top:971px;width:82px;height:31px;line-height:31px;'>9.00</div><div class='ln' style='left:6px;top:1002px;width:844px'></div><div class='a' style='left:1344px;top:0px;width:82px;height:3px;background:#cfe6f2'></div><div class='a' style='left:1625px;top:0px;width:82px;height:3px;background:#cfe6f2'></div><div class='ln' style='left:864px;top:3px;width:843px'></div><div class='lbl' style='left:877.5px;top:3.50px;line-height:32px;'>ИТ2 (1.5)</div><div class='lbl' style='left:1157.5px;top:3.50px;line-height:32px;'>Мен</div><div class='od' style='left:1344px;top:5px;width:82px;height:30px;line-height:30px;'>1.44</div><div class='lbl' style='left:1439.5px;top:3.50px;line-height:32px;'>Бол</div><div class='od' style='left:1625px;top:5px;width:82px;height:30px;line-height:30px;'>2.80</div><div class='ln' style='left:864px;top:35px;width:843px'></div><div class='lbl' style='left:877.5px;top:34.50px;line-height:32px;'>ИТ2 (2)</div><div class='lbl' style='left:1157.5px;top:34.50px;line-height:32px;'>Мен</div><div class='od' style='left:1344px;top:37px;width:82px;height:28px;line-height:28px;'>1.12</div><div class='lbl' style='left:1439.5px;top:34.50px;line-height:32px;'>Бол</div><div class='od' style='left:1625px;top:37px;width:82px;height:28px;line-height:28px;'>6.10</div><div class='ln' style='left:864px;top:65px;width:843px'></div><div class='lbl' style='left:877.5px;top:66.00px;line-height:32px;'>ИТ2 (2.5)</div><div class='lbl' style='left:1157.5px;top:66.00px;line-height:32px;'>Мен</div><div class='od' style='left:1344px;top:67px;width:82px;height:30px;line-height:30px;'>1.08</div><div class='lbl' style='left:1439.5px;top:66.00px;line-height:32px;'>Бол</div><div class='od' style='left:1625px;top:67px;width:82px;height:30px;line-height:30px;'>7.80</div><div class='ln' style='left:864px;top:97px;width:843px'></div><div class='lbl' style='left:877.5px;top:97.60px;line-height:32px;'>ИТ2 (3)</div><div class='lbl' style='left:1157.5px;top:97.60px;line-height:32px;'>Бол</div><div class='od' style='left:1344px;top:99px;width:82px;height:30px;line-height:30px;'>20.0</div><div class='ln' style='left:864px;top:129px;width:843px'></div><div class='lbl' style='left:877.5px;top:128.65px;line-height:32px;'>ИТ2 (3.5)</div><div class='lbl' style='left:1157.5px;top:128.65px;line-height:32px;'>Бол</div><div class='od' style='left:1344px;top:131px;width:82px;height:29px;line-height:29px;'>22.0</div><div class='ln' style='left:864px;top:160px;width:843px'></div><div class='gh' style='left:864px;top:165px;width:843px;height:29px'></div><div class='cb' style='left:878px;top:168.5px'></div><div class='st' style='left:908px;top:166.0px;line-height:30px'>ГОЛЫ</div><svg class='a' style='left:1678px;top:172.5px' width='21' height='14'><path d='M2,11.5 L10.5,3 L19,11.5' fill='none' stroke='#3b93c9' stroke-width='2.8'/></svg><div class='lbl' style='left:877.5px;top:194.09px;line-height:32px;'>К1</div><div class='lbl' style='left:1157.5px;top:194.09px;line-height:32px;'>Забьет</div><div class='od' style='left:1344px;top:195px;width:82px;height:31px;line-height:31px;'>1.28</div><div class='lbl' style='left:1439.5px;top:194.09px;line-height:32px;'>Не забьет</div><div class='od' style='left:1625px;top:195px;width:82px;height:31px;line-height:31px;'>3.70</div><div class='ln' style='left:864px;top:226px;width:843px'></div><div class='lbl' style='left:877.5px;top:225.86px;line-height:32px;'>К2</div><div class='lbl' style='left:1157.5px;top:225.86px;line-height:32px;'>Забьет</div><div class='od' style='left:1344px;top:228px;width:82px;height:29px;line-height:29px;'>1.40</div><div class='lbl' style='left:1439.5px;top:225.86px;line-height:32px;'>Не забьет</div><div class='od' style='left:1625px;top:228px;width:82px;height:29px;line-height:29px;'>3.00</div><div class='ln' style='left:864px;top:257px;width:843px'></div><div class='gh' style='left:864px;top:262px;width:843px;height:30px'></div><div class='cb' style='left:878px;top:266.1px'></div><div class='st' style='left:908px;top:263.6px;line-height:30px'>ОБЕ ЗАБЬЮТ</div><svg class='a' style='left:1678px;top:270.1px' width='21' height='14'><path d='M2,11.5 L10.5,3 L19,11.5' fill='none' stroke='#3b93c9' stroke-width='2.8'/></svg><div class='lbl' style='left:877.5px;top:291.68px;line-height:32px;'>Да</div><div class='od' style='left:1204px;top:293px;width:82px;height:30px;line-height:30px;'>1.85</div><div class='lbl' style='left:1299.5px;top:291.68px;line-height:32px;'>Нет</div><div class='od' style='left:1626px;top:293px;width:82px;height:30px;line-height:30px;'>1.95</div><div class='ln' style='left:864px;top:323px;width:843px'></div><div class='gh' style='left:864px;top:328px;width:843px;height:30px'></div><div class='cb' style='left:878px;top:332.3px'></div><div class='st' style='left:908px;top:329.8px;line-height:30px'>ПОБЕДИТ И ТБ</div><svg class='a' style='left:1678px;top:336.3px' width='21' height='14'><path d='M2,11.5 L10.5,3 L19,11.5' fill='none' stroke='#3b93c9' stroke-width='2.8'/></svg><div class='lbl' style='left:877.5px;top:357.88px;line-height:32px;'>П1 и ТБ (1.5)</div><div class='lbl' style='left:1299.5px;top:357.88px;line-height:32px;'>Да</div><div class='od' style='left:1415px;top:359px;width:82px;height:31px;line-height:31px;'>3.00</div><div class='lbl' style='left:1510.5px;top:357.88px;line-height:32px;'>Нет</div><div class='od' style='left:1626px;top:359px;width:82px;height:31px;line-height:31px;'>1.35</div><div class='ln' style='left:864px;top:390px;width:843px'></div><div class='lbl' style='left:877.5px;top:389.65px;line-height:32px;'>П1 и ТБ (2.5)</div><div class='lbl' style='left:1299.5px;top:389.65px;line-height:32px;'>Да</div><div class='od' style='left:1415px;top:392px;width:82px;height:29px;line-height:29px;'>4.00</div><div class='lbl' style='left:1510.5px;top:389.65px;line-height:32px;'>Нет</div><div class='od' style='left:1626px;top:392px;width:82px;height:29px;line-height:29px;'>1.22</div><div class='ln' style='left:864px;top:421px;width:843px'></div><div class='lbl' style='left:877.5px;top:420.92px;line-height:32px;'>П1 и ТБ (3.5)</div><div class='lbl' style='left:1299.5px;top:420.92px;line-height:32px;'>Да</div><div class='od' style='left:1415px;top:423px;width:82px;height:29px;line-height:29px;'>7.80</div><div class='lbl' style='left:1510.5px;top:420.92px;line-height:32px;'>Нет</div><div class='od' style='left:1626px;top:423px;width:82px;height:29px;line-height:29px;'>1.06</div><div class='ln' style='left:864px;top:452px;width:843px'></div><div class='lbl' style='left:877.5px;top:452.19px;line-height:32px;'>П1 и ТБ (4.5)</div><div class='lbl' style='left:1299.5px;top:452.19px;line-height:32px;'>Да</div><div class='od' style='left:1415px;top:454px;width:82px;height:29px;line-height:29px;'>13.0</div><div class='lbl' style='left:1510.5px;top:452.19px;line-height:32px;'>Нет</div><div class='od' style='left:1626px;top:454px;width:82px;height:29px;line-height:29px;'>1.01</div><div class='ln' style='left:864px;top:483px;width:843px'></div><div class='lbl' style='left:877.5px;top:483.47px;line-height:32px;'>П2 и ТБ (1.5)</div><div class='lbl' style='left:1299.5px;top:483.47px;line-height:32px;'>Да</div><div class='od' style='left:1415px;top:485px;width:82px;height:30px;line-height:30px;'>4.20</div><div class='lbl' style='left:1510.5px;top:483.47px;line-height:32px;'>Нет</div><div class='od' style='left:1626px;top:485px;width:82px;height:30px;line-height:30px;'>1.20</div><div class='ln' style='left:864px;top:515px;width:843px'></div><div class='lbl' style='left:877.5px;top:514.74px;line-height:32px;'>П2 и ТБ (2.5)</div><div class='lbl' style='left:1299.5px;top:514.74px;line-height:32px;'>Да</div><div class='od' style='left:1415px;top:517px;width:82px;height:29px;line-height:29px;'>5.40</div><div class='lbl' style='left:1510.5px;top:514.74px;line-height:32px;'>Нет</div><div class='od' style='left:1626px;top:517px;width:82px;height:29px;line-height:29px;'>1.13</div><div class='ln' style='left:864px;top:546px;width:843px'></div><div class='lbl' style='left:877.5px;top:546.00px;line-height:32px;'>П2 и ТБ (3.5)</div><div class='lbl' style='left:1299.5px;top:546.00px;line-height:32px;'>Да</div><div class='od' style='left:1415px;top:548px;width:82px;height:29px;line-height:29px;'>11.0</div><div class='lbl' style='left:1510.5px;top:546.00px;line-height:32px;'>Нет</div><div class='od' style='left:1626px;top:548px;width:82px;height:29px;line-height:29px;'>1.02</div><div class='ln' style='left:864px;top:577px;width:843px'></div><div class='lbl' style='left:877.5px;top:577.27px;line-height:32px;'>П2 и ТБ (4.5)</div><div class='lbl' style='left:1299.5px;top:577.27px;line-height:32px;'>Да</div><div class='od' style='left:1415px;top:579px;width:82px;height:29px;line-height:29px;'>18.0</div><div class='ln' style='left:864px;top:608px;width:843px'></div><div class='gh' style='left:864px;top:613px;width:843px;height:30px'></div><div class='cb' style='left:878px;top:617.4px'></div><div class='st' style='left:908px;top:614.9px;line-height:30px'>УДАЛЕНИЕ</div><svg class='a' style='left:1678px;top:621.4px' width='21' height='14'><path d='M2,11.5 L10.5,3 L19,11.5' fill='none' stroke='#3b93c9' stroke-width='2.8'/></svg><div class='lbl' style='left:877.5px;top:642.99px;line-height:32px;'>Будет</div><div class='od' style='left:1204px;top:644px;width:82px;height:31px;line-height:31px;'>4.00</div><div class='lbl' style='left:1299.5px;top:642.99px;line-height:32px;'>Не будет</div><div class='od' style='left:1626px;top:644px;width:82px;height:31px;line-height:31px;'>1.22</div><div class='ln' style='left:864px;top:675px;width:843px'></div><div class='gh' style='left:864px;top:680px;width:843px;height:29px'></div><div class='cb' style='left:878px;top:683.5px'></div><div class='st' style='left:908px;top:681.0px;line-height:30px'>СЧЕТ</div><svg class='a' style='left:1678px;top:687.5px' width='21' height='14'><path d='M2,11.5 L10.5,3 L19,11.5' fill='none' stroke='#3b93c9' stroke-width='2.8'/></svg><div class='lbl' style='left:877.5px;top:709.09px;line-height:32px;'>1:0</div><div class='od' style='left:993px;top:710px;width:82px;height:31px;line-height:31px;'>7.30</div><div class='lbl' style='left:1088.5px;top:709.09px;line-height:32px;'>2:0</div><div class='od' style='left:1204px;top:710px;width:82px;height:31px;line-height:31px;'>10.5</div><div class='lbl' style='left:1299.5px;top:709.09px;line-height:32px;'>2:1</div><div class='od' style='left:1415px;top:710px;width:82px;height:31px;line-height:31px;'>9.20</div><div class='lbl' style='left:1510.5px;top:709.09px;line-height:32px;'>3:0</div><div class='od' style='left:1626px;top:710px;width:82px;height:31px;line-height:31px;'>22.0</div><div class='ln' style='left:864px;top:741px;width:843px'></div><div class='lbl' style='left:877.5px;top:740.86px;line-height:32px;'>3:1</div><div class='od' style='left:993px;top:743px;width:82px;height:29px;line-height:29px;'>19.0</div><div class='lbl' style='left:1088.5px;top:740.86px;line-height:32px;'>3:2</div><div class='od' style='left:1204px;top:743px;width:82px;height:29px;line-height:29px;'>32.0</div><div class='lbl' style='left:1299.5px;top:740.86px;line-height:32px;'>0:0</div><div class='od' style='left:1415px;top:743px;width:82px;height:29px;line-height:29px;'>10.5</div><div class='lbl' style='left:1510.5px;top:740.86px;line-height:32px;'>1:1</div><div class='od' style='left:1626px;top:743px;width:82px;height:29px;line-height:29px;'>5.90</div><div class='ln' style='left:864px;top:772px;width:843px'></div><div class='lbl' style='left:877.5px;top:772.12px;line-height:32px;'>2:2</div><div class='od' style='left:993px;top:774px;width:82px;height:29px;line-height:29px;'>12.5</div><div class='lbl' style='left:1088.5px;top:772.12px;line-height:32px;'>0:1</div><div class='od' style='left:1204px;top:774px;width:82px;height:29px;line-height:29px;'>8.80</div><div class='lbl' style='left:1299.5px;top:772.12px;line-height:32px;'>0:2</div><div class='od' style='left:1415px;top:774px;width:82px;height:29px;line-height:29px;'>15.0</div><div class='lbl' style='left:1510.5px;top:772.12px;line-height:32px;'>1:2</div><div class='od' style='left:1626px;top:774px;width:82px;height:29px;line-height:29px;'>11.0</div><div class='ln' style='left:864px;top:803px;width:843px'></div><div class='lbl' style='left:877.5px;top:803.39px;line-height:32px;'>0:3</div><div class='od' style='left:993px;top:805px;width:82px;height:30px;line-height:30px;'>36.0</div><div class='lbl' style='left:1088.5px;top:803.39px;line-height:32px;'>1:3</div><div class='od' style='left:1204px;top:805px;width:82px;height:30px;line-height:30px;'>27.0</div><div class='lbl' style='left:1299.5px;top:803.39px;line-height:32px;'>2:3</div><div class='od' style='left:1415px;top:805px;width:82px;height:30px;line-height:30px;'>38.0</div><div class='lbl' style='left:1510.5px;top:803.39px;line-height:32px;'>4:0</div><div class='od' style='left:1626px;top:805px;width:82px;height:30px;line-height:30px;'>37.0</div><div class='ln' style='left:864px;top:835px;width:843px'></div><div class='lbl' style='left:877.5px;top:834.66px;line-height:32px;'>4:1</div><div class='od' style='left:993px;top:837px;width:82px;height:29px;line-height:29px;'>33.0</div><div class='lbl' style='left:1088.5px;top:834.66px;line-height:32px;'>4:2</div><div class='od' style='left:1204px;top:837px;width:82px;height:29px;line-height:29px;'>53.0</div><div class='lbl' style='left:1299.5px;top:834.66px;line-height:32px;'>5:0</div><div class='od' style='left:1415px;top:837px;width:82px;height:29px;line-height:29px;'>100</div><div class='lbl' style='left:1510.5px;top:834.66px;line-height:32px;'>5:1</div><div class='od' style='left:1626px;top:837px;width:82px;height:29px;line-height:29px;'>100</div><div class='ln' style='left:864px;top:866px;width:843px'></div><div class='lbl' style='left:877.5px;top:865.93px;line-height:32px;'>6:0</div><div class='od' style='left:993px;top:868px;width:82px;height:29px;line-height:29px;'>200</div><div class='lbl' style='left:1088.5px;top:865.93px;line-height:32px;'>6:1</div><div class='od' style='left:1204px;top:868px;width:82px;height:29px;line-height:29px;'>200</div><div class='lbl' style='left:1299.5px;top:865.93px;line-height:32px;'>7:0</div><div class='od' style='left:1415px;top:868px;width:82px;height:29px;line-height:29px;'>250</div><div class='lbl' style='left:1510.5px;top:865.93px;line-height:32px;'>7:1</div><div class='od' style='left:1626px;top:868px;width:82px;height:29px;line-height:29px;'>250</div><div class='ln' style='left:864px;top:897px;width:843px'></div><div class='lbl' style='left:877.5px;top:897.21px;line-height:32px;'>0:4</div><div class='od' style='left:993px;top:899px;width:82px;height:29px;line-height:29px;'>68.0</div><div class='lbl' style='left:1088.5px;top:897.21px;line-height:32px;'>1:4</div><div class='od' style='left:1204px;top:899px;width:82px;height:29px;line-height:29px;'>53.0</div><div class='lbl' style='left:1299.5px;top:897.21px;line-height:32px;'>2:4</div><div class='od' style='left:1415px;top:899px;width:82px;height:29px;line-height:29px;'>71.0</div><div class='lbl' style='left:1510.5px;top:897.21px;line-height:32px;'>0:5</div><div class='od' style='left:1626px;top:899px;width:82px;height:29px;line-height:29px;'>150</div><div class='ln' style='left:864px;top:928px;width:843px'></div><div class='lbl' style='left:877.5px;top:928.48px;line-height:32px;'>1:5</div><div class='od' style='left:993px;top:930px;width:82px;height:30px;line-height:30px;'>150</div><div class='lbl' style='left:1088.5px;top:928.48px;line-height:32px;'>0:6</div><div class='od' style='left:1204px;top:930px;width:82px;height:30px;line-height:30px;'>250</div><div class='lbl' style='left:1299.5px;top:928.48px;line-height:32px;'>1:6</div><div class='od' style='left:1415px;top:930px;width:82px;height:30px;line-height:30px;'>250</div><div class='lbl' style='left:1510.5px;top:928.48px;line-height:32px;'>0:7</div><div class='od' style='left:1626px;top:930px;width:82px;height:30px;line-height:30px;'>250</div><div class='ln' style='left:864px;top:960px;width:843px'></div></div><div class='a' style='left:1801px;top:281px;width:3px;height:79px;background:#4a4a4a'></div><div class='a' style='left:93px;top:535px;width:851px;height:76px;border:3px solid #e3000f;border-radius:2px'></div><div class='a' style='left:1813px;top:147px;width:338px;height:36px;background:#4199cb;border-radius:3px 3px 0 0'></div><svg class='a' style='left:1815px;top:148px' width='32' height='30'><path d='M4.9,5.8 H8.9 L12.2,17.3 L10.6,20.6 H26.3' fill='none' stroke='#fff' stroke-width='2.2' stroke-linejoin='round'/><path d='M9.5,6.8 L28.8,7.9 L24,17.3 L11.8,17.3 Z' fill='#fff'/><circle cx='11.9' cy='25.7' r='2.1' fill='#fff'/><circle cx='23.8' cy='25.7' r='2.1' fill='#fff'/></svg><div class='t' style='left:1853px;top:147px;line-height:36px;font-size:17px;color:#fff;letter-spacing:-0.4px'>КОРЗИНА</div><div class='a' style='left:1813px;top:183px;width:338px;height:664px;background:#fff'></div><div class='a' style='left:1813px;top:495px;width:338px;text-align:center;font-size:19px;line-height:23px;color:#333;letter-spacing:0.4px'>Ваша корзина пуста.<br>Чтобы сделать ставку, выберите<br>исход события.</div><div class='a' style='left:1813px;top:855px;width:338px;height:91px;border-radius:4px;overflow:hidden;background:linear-gradient(100deg,#b3d2ee 0%,#c9def2 25%,#dfe9f3 50%,#e9eef4 75%,#ebeff4 100%)'><div class='a' style='left:-60px;top:50px;width:330px;height:150px;border-radius:50%;border-top:1.5px solid rgba(255,255,255,.3)'></div><div class='a' style='left:70px;top:-30px;width:90px;height:120px;border-radius:50%;background:rgba(120,170,220,.05)'></div><div class='a' style='left:190px;top:20px;width:70px;height:2px;background:rgba(255,255,255,.8);transform:rotate(-4deg);filter:blur(0.6px)'></div><div class='a' style='left:255px;top:13px;width:75px;height:2px;background:rgba(255,255,255,.8);transform:rotate(-4deg);filter:blur(0.6px)'></div><div class='a' style='left:0px;top:18px;width:25px;height:2px;background:rgba(255,255,255,.9);transform:rotate(25deg);filter:blur(0.5px)'></div><div class='a' style='left:100px;top:47px;width:25px;height:6px;background:rgba(220,150,170,.35);filter:blur(1px)'></div></div><div class='t' style='left:1829px;top:876px;line-height:30px;font-size:22px;font-weight:bold;color:#184d9b;letter-spacing:0px'>21 ГОД</div><div class='t' style='left:1829px;top:902px;line-height:22px;font-size:17px;color:#2659a3;letter-spacing:0.7px'>Играем по правилам</div><svg class='a' style='left:2077px;top:883px' width='66' height='38'><path fill-rule='evenodd' fill='#000' d='M7.3,0 L30,0 C35,0 36.3,4 35.5,9 L34.8,14 C34,19 30.5,22 26,22 L4.3,22 Z M17.3,9.7 L27.5,9.7 L26.8,15.3 L16.5,15.3 Z'/><path fill='#000' d='M1.7,28.2 H11.5 L10.4,35.8 H0.5 Z'/><path fill-rule='evenodd' fill='#000' d='M39.8,0 H63 L61.7,9.7 H48 L47.3,14.5 H53.5 C60,14.5 63.3,18 62.5,24 L61.8,29 C60.8,34 57,36.3 52,36.3 H34.3 Z M45.8,20.5 H51.3 C52.8,20.5 53.5,21.5 53.3,23 L53,25 C52.8,26.3 52,26.8 50.7,26.8 H44.9 Z'/></svg><div class='a' style='left:1813px;top:952px;width:338px;height:225px;background:#e5f3fc;border-radius:3px 3px 0 0'></div><div class='a' style='left:1813px;top:960px;width:338px;line-height:32px;text-align:center;font-size:22px;font-weight:bold;color:#222;letter-spacing:1.8px;-webkit-text-stroke:0.6px #222'>Служба поддержки</div><div class='a' style='left:1819px;top:1034px;width:159px;height:59px;background:#fff;border-radius:4px;box-shadow:0 1px 4px rgba(0,0,0,.15)'></div><div class='a' style='left:1985px;top:1034px;width:159px;height:59px;background:#fff;border-radius:4px;box-shadow:0 1px 4px rgba(0,0,0,.15)'></div><div class='t' style='left:1829px;top:1049px;line-height:30px;font-size:20px;font-weight:bold;color:#222;letter-spacing:0.8px;-webkit-text-stroke:0.5px #222'>Live-чат</div><div class='t' style='left:1995px;top:1049px;line-height:30px;font-size:20px;font-weight:bold;color:#222;letter-spacing:1.0px;-webkit-text-stroke:0.5px #222'>Telegram</div><svg class='a' style='left:1933px;top:1046px' width='32' height='36'><path d='M14.6,1.3 C19,1.3 21,3 22,4.2 C26,5 28.5,9 28.5,13 L28.7,17.5 C30,19 30,22 27.9,24.5 C27,29 24,31.5 21.7,31.6 C19,33.5 17,34 14.9,34 C10,34 7,31 6,29 C3,26 1,22 1,18 C1,9 6,1.3 14.6,1.3 Z' fill='#3a79b3'/><path d='M5.6,18.5 C11,18 18,14.5 21.3,9.8 C23.5,12.5 25,15.5 25.2,19.5 L25.3,25 L15,25.5 C12,25.5 11.5,28.8 14,29 C11,29 8.5,27.5 7,24.5 C5.5,22.5 5,20 5.2,17.2 Z' fill='#fff'/><path d='M14.5,27 L26,26.6' stroke='#3a79b3' stroke-width='3.8' stroke-linecap='round'/></svg><svg class='a' style='left:2099px;top:1049px' width='32' height='30'><path d='M1,13 L29,1 L24,28 L13,20 L19,10 L10,17 Z' fill='#3a79b3'/></svg><div class='a' style='left:1813px;top:1136px;width:338px;line-height:32px;text-align:center;font-size:22.5px;font-weight:bold;color:#222;letter-spacing:1.9px;-webkit-text-stroke:0.6px #222'>8 800 100 74 75</div></body></html>
